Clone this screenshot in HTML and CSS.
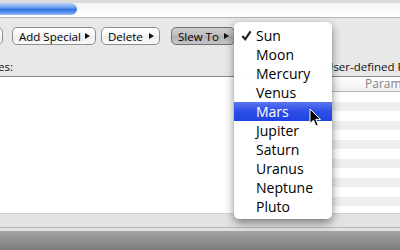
FILE: index.html
```html
<!DOCTYPE html>
<html lang="en">

<head>
    <meta charset="UTF-8">
    <title>Slew To</title>
    <link rel="stylesheet" href="styles.css">
</head>

<body>
    <div class="window">
        <div class="topstrip">
            <div class="progress">
                <div class="progress-fill"></div>
            </div>
        </div>

        <div class="toolbar">
            <div class="buttons">
                <button class="btn btn-cut"></button>
                <button class="btn btn-add">Add Special <span class="tri"></span></button>
                <button class="btn btn-delete">Delete <span class="tri"></span></button>
                <button class="btn btn-slew pressed">Slew To <span class="tri"></span></button>
            </div>
            <div class="labels">
                <div class="label-left"><span>Bodies:</span></div>
                <div class="label-right">User-defined F</div>
            </div>
        </div>

        <div class="content">
            <div class="list-left"></div>
            <div class="table-right">
                <div class="table-head">Parame</div>
                <div class="table-rows"></div>
            </div>
        </div>

        <div class="statusbar"></div>
        <div class="bottombar"></div>
    </div>

    <!-- popup menu for Slew To -->
    <ul class="menu">
        <li class="checked">
            <svg class="check" width="11" height="11" viewBox="0 0 11 11">
                <path d="M1.3 6 L4.2 9.2 L9.6 1.4" fill="none" stroke="#222" stroke-width="2.1"/>
            </svg>
            Sun
        </li>
        <li>Moon</li>
        <li>Mercury</li>
        <li>Venus</li>
        <li class="active">Mars</li>
        <li>Jupiter</li>
        <li>Saturn</li>
        <li>Uranus</li>
        <li>Neptune</li>
        <li>Pluto</li>
    </ul>

    <svg class="cursor" width="13" height="20" viewBox="0 0 13 20">
        <path d="M1 1 L1 15.5 L4.5 12.2 L7 18 L9.2 17 L6.8 11.4 L11.5 11.4 Z"
            fill="#000" stroke="#fff" stroke-width="1"/>
    </svg>
</body>

</html>
```

FILE: styles.css
```css
body {
    margin: 0;
    width: 400px;
    height: 250px;
    overflow: hidden;
    font-family: 'Open Sans', sans-serif;
    background: #e8e8e8;
    position: relative;
}

.window {
    display: flex;
    flex-direction: column;
    height: 250px;
    overflow: hidden;
}

/* top strip with the progress bar */
.topstrip {
    height: 14px;
    border-top: 3px solid #dcdcdc;
    border-bottom: 1px solid #b4b4b4;
    background: #fff;
}

.progress {
    height: 12px;
    background: linear-gradient(#f4f4f4, #fff);
}

.progress-fill {
    width: 77px;
    height: 12px;
    border-radius: 0 6px 6px 0;
    background: linear-gradient(#b8d2f8, #6a9cec 40%, #2f6fe2 55%, #5c93ec 80%, #9cc1f7);
}

/* toolbar */
.toolbar {
    height: 58px;
    background: #e8e8e8;
    border-bottom: 1px solid #8a8a8a;
}

.buttons {
    display: flex;
    margin-top: 9px;
}

.btn {
    height: 18px;
    padding: 0 0 0 6px;
    border: 1px solid #8e8e8e;
    border-radius: 5px;
    background: linear-gradient(#ffffff, #f6f6f6 50%, #ececec 51%, #fbfbfb);
    font-family: 'Open Sans', sans-serif;
    font-size: 11.5px;
    color: #000;
    text-align: left;
    display: flex;
    align-items: center;
    justify-content: space-between;
    box-sizing: border-box;
    flex-shrink: 0;
}

.btn-cut {
    width: 40px;
    margin-left: -37px;
}

.btn-add {
    width: 84px;
    margin-left: 9px;
}

.btn-delete {
    width: 59px;
    margin-left: 5px;
}

.btn-slew {
    width: 64px;
    margin-left: 11px;
}

.pressed {
    border-color: #707070;
    background: linear-gradient(#cfcfcf, #bcbcbc 50%, #afafaf 51%, #c6c6c6);
}

.tri {
    width: 0;
    height: 0;
    margin-right: 5px;
    border-top: 3px solid transparent;
    border-bottom: 3px solid transparent;
    border-left: 5px solid #111;
}

.labels {
    display: flex;
    margin-top: 14px;
    font-size: 11.5px;
    color: #111;
    white-space: nowrap;
}

.label-left {
    width: 13px;
    flex-shrink: 0;
    overflow: hidden;
    direction: rtl;
}

.label-left span {
    direction: ltr;
    unicode-bidi: embed;
}

.label-right {
    margin-left: 312px;
}

/* main content */
.content {
    display: flex;
    height: 136px;
    background: #fff;
}

.list-left {
    width: 322px;
    flex-shrink: 0;
    background: #fff;
}

.table-right {
    flex: 1;
    min-width: 0;
    display: flex;
    flex-direction: column;
}

.table-head {
    height: 14px;
    line-height: 14px;
    padding-left: 43px;
    font-size: 12px;
    color: #858585;
    white-space: nowrap;
    overflow: hidden;
    background: linear-gradient(#ffffff, #f0f0f0);
    border-bottom: 1px solid #b0b0b0;
}

.table-rows {
    flex: 1;
    background: repeating-linear-gradient(#fff 0, #fff 10px, #eeeeee 10px, #eeeeee 19px);
}

.statusbar {
    height: 13px;
    background: #e3e3e3;
    border-bottom: 1px solid #b6b6b6;
    border-top: 1px solid #d0d0d0;
}

.bottombar {
    flex: 1;
    border-top: 3px solid #e2e2e2;
    background: linear-gradient(#a4a4a4, #7d7d7d);
}

/* popup menu */
.menu {
    position: absolute;
    left: 234px;
    top: 22px;
    width: 98px;
    margin: 0;
    padding: 4px 0 3px;
    list-style: none;
    background: rgba(255, 255, 255, 0.98);
    border-radius: 5px;
    box-shadow: 0 4px 10px rgba(0, 0, 0, 0.45), 0 0 1px rgba(0, 0, 0, 0.3);
}

.menu li {
    position: relative;
    height: 19px;
    line-height: 19px;
    padding-left: 22px;
    font-size: 14px;
    color: #000;
}

.menu .check {
    position: absolute;
    left: 7px;
    top: 4px;
}

.menu .active {
    color: #fff;
    background: linear-gradient(#5b76f1, #2c4ee6 50%, #1f43e2);
}

.cursor {
    position: absolute;
    left: 309px;
    top: 108px;
}
```
